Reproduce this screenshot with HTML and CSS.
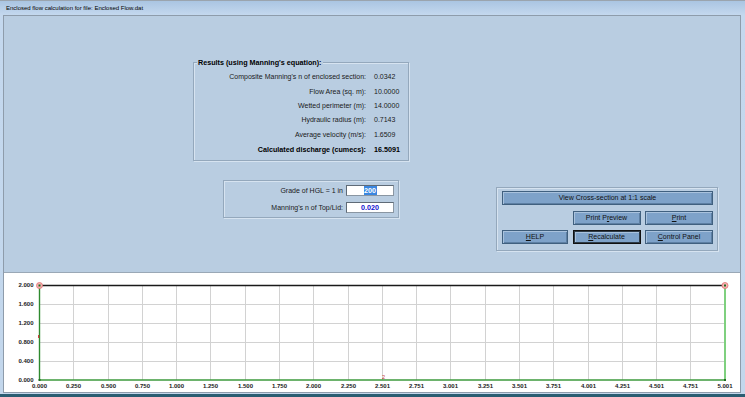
FILE: index.html
```html
<!DOCTYPE html>
<html>
<head>
<meta charset="utf-8">
<link rel="stylesheet" href="styles.css">
</head>
<body>
<div class="window">
  <div class="titlebar">Enclosed flow calculation for file: Enclosed Flow.dat</div>
  <div class="client">
    <div class="panel">
      <div class="group results">
        <span class="group-title">Results (using Manning's equation):</span>
        <div class="rows">
          <span class="lbl">Composite Manning's n of enclosed section:</span><span class="val">0.0342</span>
          <span class="lbl">Flow Area (sq. m):</span><span class="val">10.0000</span>
          <span class="lbl">Wetted perimeter (m):</span><span class="val">14.0000</span>
          <span class="lbl">Hydraulic radius (m):</span><span class="val">0.7143</span>
          <span class="lbl">Average velocity (m/s):</span><span class="val">1.6509</span>
          <span class="lbl strong last">Calculated discharge (cumecs):</span><span class="val strong last">16.5091</span>
        </div>
      </div>
      <div class="lower">
        <div class="group grade">
          <span class="lbl">Grade of HGL = 1 in</span><span class="field"><span class="sel">200</span></span>
          <span class="lbl">Manning's n of Top/Lid:</span><span class="field blue">0.020</span>
        </div>
        <div class="group actions">
          <button class="btn wide">View Cross-section at 1:1 scale</button>
          <span></span>
          <button class="btn">Print P<u>r</u>eview</button>
          <button class="btn"><u>P</u>rint</button>
          <button class="btn"><u>H</u>ELP</button>
          <button class="btn default"><u>R</u>ecalculate</button>
          <button class="btn"><u>C</u>ontrol Panel</button>
        </div>
      </div>
    </div>
    <div class="chart">
      <svg width="736" height="119" viewBox="4 273 736 119" xmlns="http://www.w3.org/2000/svg">
        <g stroke="#d2d2d2" stroke-width="1">
          <line x1="73.5" y1="285" x2="73.5" y2="380"/>
          <line x1="108.5" y1="285" x2="108.5" y2="380"/>
          <line x1="142.5" y1="285" x2="142.5" y2="380"/>
          <line x1="176.5" y1="285" x2="176.5" y2="380"/>
          <line x1="210.5" y1="285" x2="210.5" y2="380"/>
          <line x1="245.5" y1="285" x2="245.5" y2="380"/>
          <line x1="279.5" y1="285" x2="279.5" y2="380"/>
          <line x1="313.5" y1="285" x2="313.5" y2="380"/>
          <line x1="348.5" y1="285" x2="348.5" y2="380"/>
          <line x1="382.5" y1="285" x2="382.5" y2="380"/>
          <line x1="416.5" y1="285" x2="416.5" y2="380"/>
          <line x1="450.5" y1="285" x2="450.5" y2="380"/>
          <line x1="485.5" y1="285" x2="485.5" y2="380"/>
          <line x1="519.5" y1="285" x2="519.5" y2="380"/>
          <line x1="553.5" y1="285" x2="553.5" y2="380"/>
          <line x1="588.5" y1="285" x2="588.5" y2="380"/>
          <line x1="622.5" y1="285" x2="622.5" y2="380"/>
          <line x1="656.5" y1="285" x2="656.5" y2="380"/>
          <line x1="690.5" y1="285" x2="690.5" y2="380"/>
          <line x1="39.5" y1="304.5" x2="725" y2="304.5"/>
          <line x1="39.5" y1="323.5" x2="725" y2="323.5"/>
          <line x1="39.5" y1="342.5" x2="725" y2="342.5"/>
          <line x1="39.5" y1="361.5" x2="725" y2="361.5"/>
        </g>
        <line x1="39.5" y1="285.5" x2="725" y2="285.5" stroke="#1a1a1a" stroke-width="1.4"/>
        <line x1="39.5" y1="380" x2="725" y2="380" stroke="#3d9a3d" stroke-width="1.4"/>
        <line x1="39.5" y1="285" x2="39.5" y2="380" stroke="#2e8a2e" stroke-width="1.4"/>
        <line x1="725" y1="285" x2="725" y2="380" stroke="#7fd07f" stroke-width="2"/>
        <rect x="38" y="335" width="1.2" height="3" fill="#d04040"/>
        <circle cx="39.5" cy="285.5" r="3" fill="#f6b5b5" stroke="#e07070" stroke-width="0.8"/>
        <circle cx="725" cy="285.5" r="3" fill="#f6b5b5" stroke="#e07070" stroke-width="0.8"/>
        <g fill="#1f6a1f">
          <rect x="38.5" y="284.5" width="2" height="2"/>
          <rect x="724" y="284.5" width="2" height="2"/>
          <rect x="38.5" y="379" width="2" height="2"/>
          <rect x="724" y="379" width="2" height="2"/>
        </g>
        <text x="382" y="378.5" class="mark">2</text>
        <g class="ylab" text-anchor="end">
          <text x="33.5" y="287.2">2.000</text>
          <text x="33.5" y="306.2">1.600</text>
          <text x="33.5" y="325.2">1.200</text>
          <text x="33.5" y="344.2">0.800</text>
          <text x="33.5" y="363.2">0.400</text>
          <text x="33.5" y="382.2">0.000</text>
        </g>
        <g class="xlab" text-anchor="middle">
          <text x="39.5" y="388">0.000</text>
          <text x="73.5" y="388">0.250</text>
          <text x="108.5" y="388">0.500</text>
          <text x="142.5" y="388">0.750</text>
          <text x="176.5" y="388">1.000</text>
          <text x="210.5" y="388">1.250</text>
          <text x="245.5" y="388">1.500</text>
          <text x="279.5" y="388">1.750</text>
          <text x="313.5" y="388">2.000</text>
          <text x="348.5" y="388">2.250</text>
          <text x="382.5" y="388">2.501</text>
          <text x="416.5" y="388">2.751</text>
          <text x="450.5" y="388">3.001</text>
          <text x="485.5" y="388">3.251</text>
          <text x="519.5" y="388">3.501</text>
          <text x="553.5" y="388">3.751</text>
          <text x="588.5" y="388">4.001</text>
          <text x="622.5" y="388">4.251</text>
          <text x="656.5" y="388">4.501</text>
          <text x="690.5" y="388">4.751</text>
          <text x="725" y="388">5.001</text>
        </g>
      </svg>
    </div>
  </div>
  <div class="taskedge"></div>
</div>
</body>
</html>
```

FILE: styles.css
```css
* { box-sizing: border-box; }
html, body { margin: 0; padding: 0; }
body {
  width: 745px;
  height: 397px;
  overflow: hidden;
  background: #c3d7ec;
  font-family: "Liberation Sans", Arial, sans-serif;
  color: #1e1e1e;
}
.window {
  width: 745px;
  height: 397px;
  display: flex;
  flex-direction: column;
  border-top: 1px solid #9aa4ae;
  background: linear-gradient(#aac5e2 0px, #c4d8ee 14px, #c3d7ec 100%);
}
.titlebar {
  height: 14px;
  line-height: 15px;
  padding-left: 6px;
  font-size: 6px;
  color: #000;
}
.client {
  margin-left: 3px;
  width: 738px;
  height: 378px;
  border: 1px solid #8e9cab;
  display: flex;
  flex-direction: column;
}
.panel {
  height: 256px;
  background: #b9cde1;
  padding: 46px 0 0 189px;
  font-size: 7px;
  color: #1a1a1a;
}
.group {
  border: 1px solid #94a8bc;
  box-shadow: 1px 1px 0 #d6e3f0, inset 1px 1px 0 #d6e3f0;
  position: relative;
}
.group-title {
  position: absolute;
  top: -5px;
  left: 3px;
  padding: 0 1px;
  background: #b9cde1;
  font-weight: bold;
  font-size: 7.2px;
  line-height: 9px;
  color: #000;
}
.results {
  width: 216px;
  height: 99px;
}
.rows {
  display: grid;
  grid-template-columns: 172px auto;
  column-gap: 8px;
  grid-auto-rows: 14.3px;
  line-height: 14.3px;
  padding-top: 7.4px;
}
.lbl { text-align: right; white-space: nowrap; }
.val { white-space: nowrap; }
.strong { font-weight: bold; font-size: 7.2px; color: #000; }
.last { margin-top: 1.6px; }
.lower {
  display: flex;
  align-items: flex-start;
  margin-top: 19px;
  margin-left: 30px;
}
.grade {
  width: 176px;
  height: 38px;
  display: grid;
  grid-template-columns: 119px 48px;
  column-gap: 3px;
  grid-auto-rows: 17px;
  align-items: center;
  padding-top: 1px;
}
.field {
  height: 11px;
  background: #fff;
  border: 1px solid #8a96a2;
  border-top-color: #5f6b77;
  border-left-color: #5f6b77;
  text-align: center;
  font-weight: bold;
  font-size: 7.2px;
  line-height: 9px;
  color: #111;
}
.sel { background: #3a86e0; color: #fff; padding: 0 0.5px; }
.blue { color: #1010d0; }
.actions {
  margin-left: 97px;
  margin-top: 7px;
  width: 222px;
  height: 64px;
  display: grid;
  grid-template-columns: 66px 68px 68px;
  grid-template-rows: 14px 14px 14px;
  column-gap: 4.5px;
  row-gap: 5.5px;
  padding: 3px 0 0 5px;
}
.wide { grid-column: 1 / 4; }
.btn {
  margin: 0;
  padding: 0;
  font-family: "Liberation Sans", Arial, sans-serif;
  font-size: 7px;
  color: #111;
  background: #7ea2c9;
  border: 1px solid #40607f;
  box-shadow: inset 1px 1px 0 #a9c2dd, inset -1px -1px 0 #5d7fa3;
  line-height: 12px;
  text-align: center;
}
.btn u { text-decoration: underline; }
.default {
  border: 1px solid #111;
  box-shadow: inset 0 0 0 1px #2d3b48, inset 2px 2px 0 #a9c2dd;
}
.chart {
  height: 120px;
  border-top: 1px solid #9aa8b6;
  background: #fff;
}
.chart svg { display: block; }
.ylab text, .xlab text {
  font-family: "Liberation Sans", Arial, sans-serif;
  font-size: 6px;
  font-weight: bold;
  fill: #222;
}
.mark {
  font-family: "Liberation Sans", Arial, sans-serif;
  font-size: 5.5px;
  fill: #c83030;
}
.taskedge {
  margin-top: 1px;
  height: 3px;
  background: #2a5d72;
}
```
